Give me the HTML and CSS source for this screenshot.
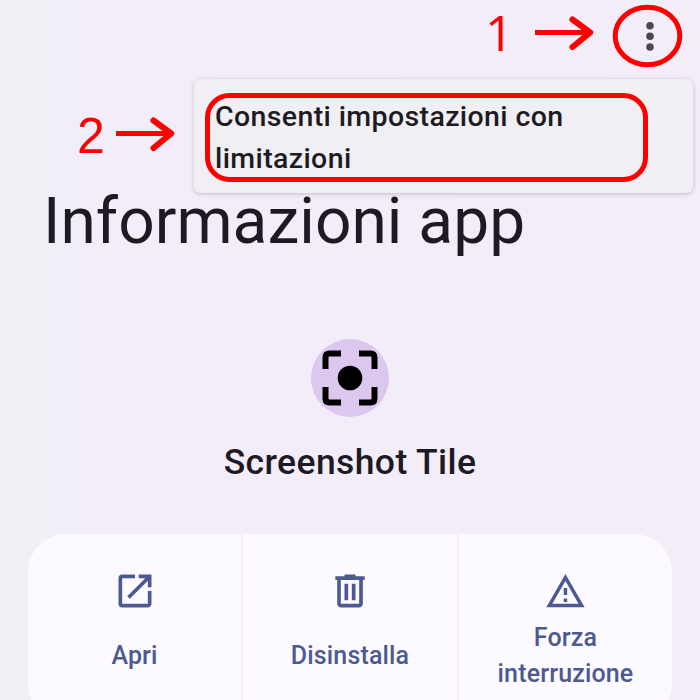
FILE: index.html
```html
<!DOCTYPE html>
<html lang="it">
<head>
<meta charset="utf-8">
<title>Informazioni app</title>
<link rel="stylesheet" href="styles.css">
</head>
<body>
<main class="screen">
  <header class="topbar">
    <svg class="more" width="10" height="30" viewBox="0 0 10 30"><circle cx="5" cy="3.800" r="3.8"/><circle cx="5" cy="14.300" r="3.8"/><circle cx="5" cy="25" r="3.8"/></svg>
  </header>
  <h1 class="title"><span>Informazioni app</span></h1>
  <section class="app">
    <svg class="app-icon" width="80" height="80" viewBox="0 0 80 80">
      <circle class="app-disc" cx="40" cy="40" r="39"/>
      <circle cx="40" cy="40" r="12.3"/>
      <path class="frame" d="M15.500 31V19.500q0-4 4-4H31M49 15.500h11.500q4 0 4 4V31M64.500 49v11.500q0 4-4 4H49M31 64.500H19.500q-4 0-4-4V49"/>
    </svg>
    <h2 class="app-name"><span>Screenshot Tile</span></h2>
  </section>
  <nav class="actions">
    <div class="action">
      <svg class="icon" width="44" height="44" viewBox="0 0 24 24"><path d="M19 19H5V5h7V3H5a2 2 0 0 0-2 2v14a2 2 0 0 0 2 2h14c1.100 0 2-.9 2-2v-7h-2v7zM14 3v2h3.590l-9.830 9.830 1.410 1.410L19 6.410V10h2V3h-7z"/></svg>
      <span class="label">Apri</span>
    </div>
    <div class="action">
      <svg class="icon" width="44" height="44" viewBox="0 0 24 24"><path d="M15 4V3H9v1H4v2h1v13c0 1.100.9 2 2 2h10c1.100 0 2-.9 2-2V6h1V4h-5zm2 15H7V6h10v13zM9 8h2v9H9zm4 0h2v9h-2z"/></svg>
      <span class="label">Disinstalla</span>
    </div>
    <div class="action">
      <svg class="icon" width="44" height="44" viewBox="0 0 24 24"><path d="M12 5.990L19.530 19H4.470L12 5.990M12 2L1 21h22L12 2zm1 14h-2v2h2v-2zm0-6h-2v4h2v-4z" transform="translate(.300 .850) scale(.95)"/></svg>
      <span class="label">Forza<br>interruzione</span>
    </div>
  </nav>
  <div class="menu"><span class="menu-item">Consenti impostazioni con<br>limitazioni</span></div>
  <svg class="marks" width="700" height="200" viewBox="0 0 700 200">
    <ellipse cx="647.500" cy="36" rx="32.300" ry="28.800"/>
    <rect x="207.500" y="95.500" width="438" height="84" rx="22"/>
    <path d="M535 32.500h55M116 133.500h55"/>
    <path class="head" d="M572.500 19.500L590.200 32.500L572.500 47M153.500 120.500L171.200 133.500L153.500 148"/>
    <text class="one" x="485" y="51">1</text>
    <text class="two" x="77" y="153">2</text>
  </svg>
</main>
</body>
</html>
```
FILE: styles.css
```css
body { margin: 0; font-family: Roboto, sans-serif; }
.screen {
  position: relative;
  width: 700px;
  height: 700px;
  overflow: hidden;
  background: linear-gradient(90deg, #f1eff2 0, #f1eff3 26px, #f1eef8 48px, #f3edf9 120px, #f3edf8 100%);
}
.topbar { display: flex; justify-content: flex-end; height: 172px; padding: 22px 45px 0 0; box-sizing: border-box; }
.more { fill: #4b4852; }
.title { margin: 0 0 0 43px; height: 100px; font-size: 64px; line-height: 100px; font-weight: 400; letter-spacing: 0.05px; color: #1d1a25; white-space: nowrap; }
.app { display: flex; flex-direction: column; align-items: center; padding-top: 66px; height: 196px; }
.app-icon { flex: none; }
.app-disc { fill: #dcc7ee; }
.frame { fill: none; stroke: #000; stroke-width: 6; }
.app-name { margin: 19px 0 0; font-size: 35.5px; line-height: 50px; font-weight: 460; letter-spacing: 0.4px; color: #1d1a25; white-space: nowrap; }
.actions { display: grid; grid-template-columns: 213px 214px 213px; gap: 2px; width: 644px; height: 188px; margin-left: 28px; border-radius: 38px; overflow: hidden; }
.action { display: flex; flex-direction: column; align-items: center; padding-top: 35px; background: #fcfaff; color: #4d5a91; }
.icon { flex: none; fill: currentColor; }
.label { display: flex; align-items: center; height: 72px; margin-top: 7px; font-size: 25px; line-height: 36px; font-weight: 480; letter-spacing: 0.15px; text-align: center; white-space: nowrap; }
.menu { position: absolute; left: 194px; top: 79px; width: 499px; height: 114px; box-sizing: border-box; padding: 17px 21px 0; border-radius: 6px; background: #f1eff4; box-shadow: 0 1px 4px #7b748566; }
.menu-item { display: block; font-size: 28.5px; line-height: 42px; font-weight: 480; letter-spacing: 0.38px; color: #1d1b22; white-space: nowrap; }
.marks { position: absolute; left: 0; top: 0; fill: none; stroke: red; stroke-width: 5; }
.marks .head { stroke-width: 6; stroke-linecap: round; stroke-linejoin: round; }
.marks text { fill: red; stroke: none; font-size: 50px; }
.one { font-family: "Open Sans", sans-serif; }
.two { font-family: "Liberation Sans", sans-serif; }
```
